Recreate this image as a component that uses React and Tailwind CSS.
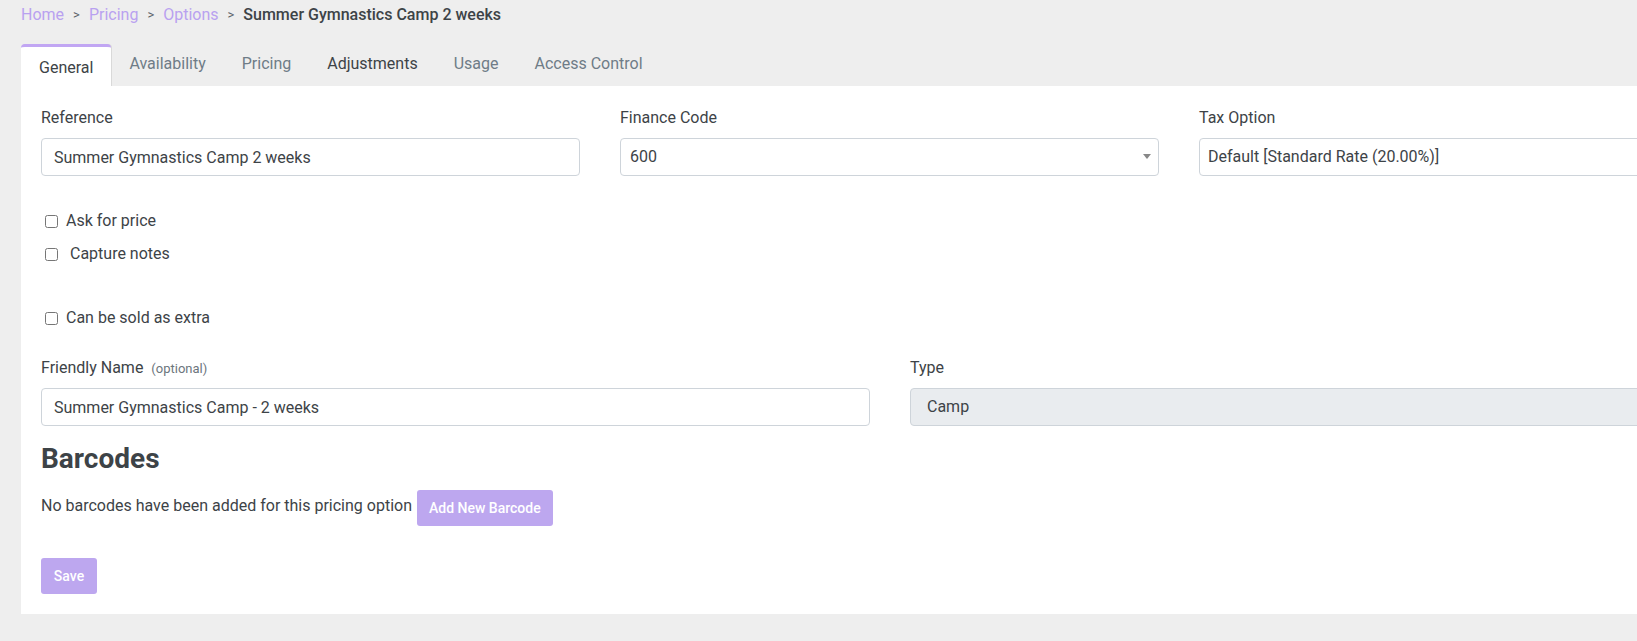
import React, { useState } from 'react';

const tabs = ['General', 'Availability', 'Pricing', 'Adjustments', 'Usage', 'Access Control'];

const Field = ({ label, hint, children, className = '' }) => (
  <div className={className}>
    <div className="h-[20px] leading-[20px] text-[16px] text-[#3d4347] mt-[1px] mb-[10px]">
      {label}
      {hint && <span className="ml-[8px] text-[13px] text-[#6c757d]">{hint}</span>}
    </div>
    {children}
  </div>
);

const Check = ({ label, checked, onChange, className = '' }) => (
  <label className={`flex items-center h-[24px] pl-[4px] text-[16px] text-[#3d4347] ${className}`}>
    <input
      type="checkbox"
      checked={checked}
      onChange={onChange}
      className="w-[13px] h-[13px] m-0 mr-[8px]"
    />
    {label}
  </label>
);

const App = () => {
  const [active, setActive] = useState('General');
  const [flags, setFlags] = useState({ price: false, notes: false, extra: false });
  const toggle = (k) => setFlags({ ...flags, [k]: !flags[k] });

  return (
    <div className="w-[1637px] h-[641px] overflow-hidden bg-[#eeeeee] font-['Roboto',sans-serif] text-[#3d4347]">
      {/* Breadcrumb */}
      <div className="pl-[21px] pt-[4px] h-[25px] leading-[20px] text-[16px] flex items-center gap-[9px]">
        <a className="text-[#b9a1f0]">Home</a>
        <span className="text-[#5c6369] text-[13px]">&gt;</span>
        <a className="text-[#b9a1f0]">Pricing</a>
        <span className="text-[#5c6369] text-[13px]">&gt;</span>
        <a className="text-[#b9a1f0]">Options</a>
        <span className="text-[#5c6369] text-[13px]">&gt;</span>
        <span className="font-medium text-[#3d4347]">Summer Gymnastics Camp 2 weeks</span>
      </div>

      {/* Tabs */}
      <div className="flex ml-[21px] mt-[19px] h-[42px]">
        {tabs.map((t) =>
          t === active ? (
            <button
              key={t}
              onClick={() => setActive(t)}
              className="h-[42px] px-[18px] pt-[3px] bg-white border-t-[3px] border-[#c1a6f3] rounded-t-[4px] shadow-[1px_0_0_#d9d9d9] text-[16px] text-[#3d4347]"
            >
              {t}
            </button>
          ) : (
            <button
              key={t}
              onClick={() => setActive(t)}
              className={`h-[42px] px-[18px] pb-[2px] text-[16px] ${
                t === 'Adjustments' ? 'text-[#3d4347]' : 'text-[#6f7c87]'
              }`}
            >
              {t}
            </button>
          )
        )}
      </div>

      {/* Card */}
      <div className="ml-[21px] w-[1780px] h-[528px] bg-white pl-[20px] pt-[21px]">
        <div className="grid grid-cols-[539px_539px_539px] gap-x-[40px]">
          <Field label="Reference">
            <input
              defaultValue="Summer Gymnastics Camp 2 weeks"
              className="w-full h-[38px] px-[12px] border border-[#ced4da] rounded-[4px] text-[16px] text-[#3d4347] outline-none"
            />
          </Field>
          <Field label="Finance Code">
            <div className="relative">
              <select
                defaultValue="600"
                className="appearance-none w-full h-[38px] px-[9px] border border-[#ced4da] rounded-[4px] text-[16px] text-[#3d4347] bg-white outline-none"
              >
                <option value="600">600</option>
              </select>
              <span className="absolute right-[8px] top-[16px] w-0 h-0 border-l-[4px] border-r-[4px] border-t-[5px] border-l-transparent border-r-transparent border-t-[#888888]" />
            </div>
          </Field>
          <Field label="Tax Option">
            <select
              defaultValue="default"
              className="appearance-none w-full h-[38px] px-[8px] border border-[#ced4da] rounded-[4px] text-[16px] text-[#3d4347] bg-white outline-none"
            >
              <option value="default">Default [Standard Rate (20.00%)]</option>
            </select>
          </Field>
        </div>

        <div className="mt-[33px]">
          <Check label="Ask for price" checked={flags.price} onChange={() => toggle('price')} />
          <Check label={'\u00a0Capture notes'} checked={flags.notes} onChange={() => toggle('notes')} className="mt-[9px]" />
          <Check label="Can be sold as extra" checked={flags.extra} onChange={() => toggle('extra')} className="mt-[40px]" />
        </div>

        <div className="grid grid-cols-[829px_829px] gap-x-[40px] mt-[27px]">
          <Field label="Friendly Name" hint="(optional)">
            <input
              defaultValue="Summer Gymnastics Camp - 2 weeks"
              className="w-full h-[38px] px-[12px] border border-[#ced4da] rounded-[4px] text-[16px] text-[#3d4347] outline-none"
            />
          </Field>
          <Field label="Type">
            <div className="w-full h-[38px] px-[16px] flex items-center border border-[#ced4da] rounded-[4px] bg-[#e9ecef] text-[16px] text-[#3d4347]">
              Camp
            </div>
          </Field>
        </div>

        <h2 className="mt-[16px] h-[34px] leading-[34px] text-[28px] font-bold text-[#3d4347]">Barcodes</h2>

        <div className="flex items-center mt-[14px] h-[36px]">
          <span className="text-[16px] text-[#3d4347] pb-[5px]">No barcodes have been added for this pricing option</span>
          <button className="ml-[5px] h-[36px] px-[12px] rounded-[3px] bg-[#bda7ef] text-white text-[14px] font-medium">
            Add New Barcode
          </button>
        </div>

        <button className="mt-[32px] h-[36px] w-[56px] rounded-[3px] bg-[#bda7ef] text-white text-[14px] font-medium">
          Save
        </button>
      </div>
    </div>
  );
};

export default App;
